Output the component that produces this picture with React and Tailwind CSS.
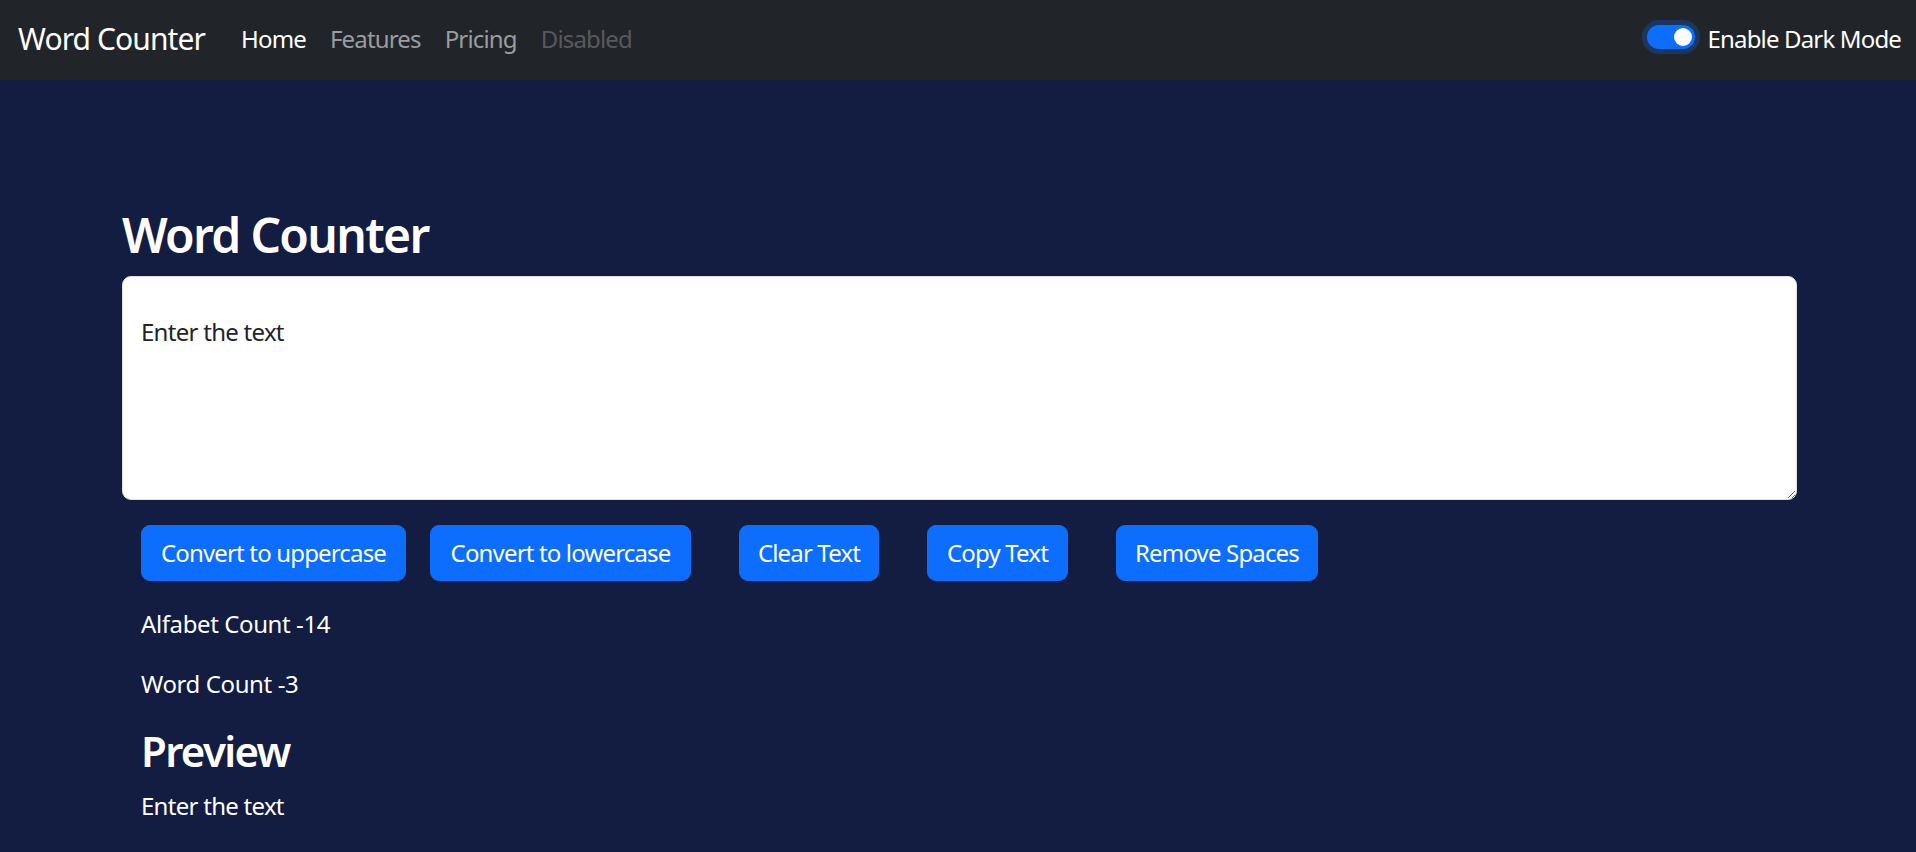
import { useState } from 'react';

function Navbar() {
  return (
    <nav className="h-[80px] bg-[#212529] flex items-center justify-between pl-[18px] pr-[15px] pb-[3px]">
      <div className="flex items-center">
        <a href="#" className="text-[30px] leading-[45px] text-white mr-[24px] tracking-[-0.03em]">
          Word Counter
        </a>
        <ul className="flex items-center text-[24px] leading-[36px] tracking-[-0.035em]">
          <li><a href="#" className="px-[12px] text-white">Home</a></li>
          <li><a href="#" className="px-[12px] text-[#9b9c9e]">Features</a></li>
          <li><a href="#" className="px-[12px] text-[#9b9c9e]">Pricing</a></li>
          <li><span className="px-[12px] text-[#58595c]">Disabled</span></li>
        </ul>
      </div>
      <div className="flex items-center">
        <div className="mb-[4px] w-[48px] h-[24px] rounded-full bg-[#0d6efd] flex items-center justify-end pr-[3px] shadow-[0_0_0_5px_#1c375e]">
          <div className="w-[18px] h-[18px] rounded-full bg-white" />
        </div>
        <label className="ml-[13px] text-[24px] leading-[36px] text-white tracking-[-0.035em]">Enable Dark Mode</label>
      </div>
    </nav>
  );
}

export default function App() {
  const [text, setText] = useState('Enter the text');

  const words = text.split(/\s+/).filter((w) => w.length !== 0).length;
  const btn = 'py-[9px] border border-[#0d6efd] bg-[#0d6efd] rounded-[9px] text-white tracking-[-0.035em]';

  return (
    <div className="min-h-screen bg-[#131c41] font-['Noto_Sans',sans-serif] tracking-[-0.025em]">
      <Navbar />
      <div className="ml-[122px] w-[1675px] pt-[126px] text-white">
        <h2 className="text-[48px] leading-[1.2] font-semibold mb-[12px] tracking-[-0.035em]">Word Counter</h2>
        <textarea
          className="block w-full h-[224px] bg-white text-[#212529] border border-[#dee2e6] rounded-[9px] px-[18px] pt-[37px] text-[24px] leading-[36px] outline-none tracking-[-0.03em]"
          value={text}
          onChange={(e) => setText(e.target.value)}
        />
        <div className="pl-[18px]">
          <div className="flex mt-[25px] mb-[25px] ml-[1px] text-[24px] leading-[36px]">
            <button className={`w-[265px] mr-[24px] ${btn}`} onClick={() => setText(text.toUpperCase())}>
              Convert to uppercase
            </button>
            <button className={`w-[261px] mr-[48px] ${btn}`} onClick={() => setText(text.toLowerCase())}>
              Convert to lowercase
            </button>
            <button className={`w-[140px] mr-[48px] ${btn}`} onClick={() => setText('')}>
              Clear Text
            </button>
            <button className={`w-[141px] mr-[48px] ${btn}`} onClick={() => navigator.clipboard?.writeText(text)}>
              Copy Text
            </button>
            <button className={`w-[202px] ${btn}`} onClick={() => setText(text.split(/[ ]+/).join(' '))}>
              Remove Spaces
            </button>
          </div>
          <p className="text-[24px] leading-[36px] mb-[24px] ml-[1px]">Alfabet Count -{text.length}</p>
          <p className="text-[24px] leading-[36px] mb-[24px] ml-[1px]">Word Count -{words}</p>
          <h3 className="text-[42px] leading-[1.2] font-semibold mb-[12px] ml-[1px] tracking-[-0.04em]">Preview</h3>
          <p className="text-[24px] leading-[36px] ml-[1px] tracking-[-0.03em]">{text.length > 0 ? text : 'Nothing to preview'}</p>
        </div>
      </div>
    </div>
  );
}
